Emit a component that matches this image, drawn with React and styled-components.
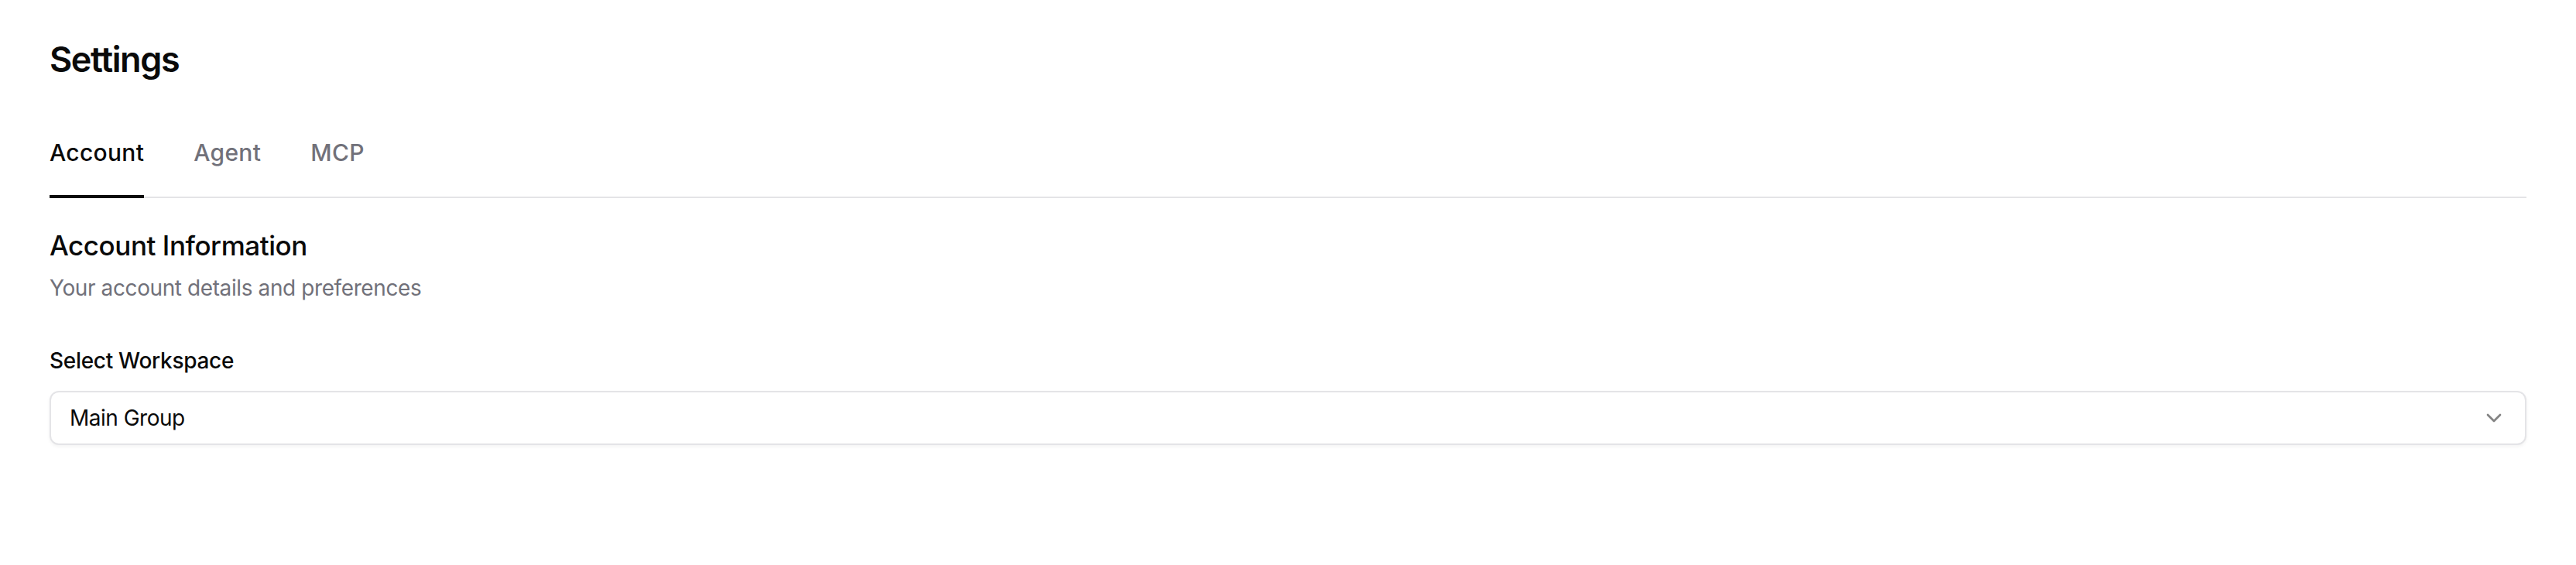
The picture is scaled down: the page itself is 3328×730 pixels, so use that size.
import React, { useState } from "react";
import styled, { createGlobalStyle } from "styled-components";
import { ChevronDown } from "lucide-react";

const GlobalStyle = createGlobalStyle`
  html, body {
    margin: 0;
    padding: 0;
    background: #ffffff;
  }
  body {
    font-family: Inter, "Noto Sans", "Liberation Sans", sans-serif;
    color: #0a0a0a;
    -webkit-font-smoothing: antialiased;
  }
  * { box-sizing: border-box; }
`;

const Page = styled.main`
  padding: 48px 64px 64px;
  min-height: 730px;
  display: flex;
  flex-direction: column;
`;

const Title = styled.h1`
  margin: 0;
  font-size: 45px;
  line-height: 58px;
  font-weight: 600;
  letter-spacing: -1.4px;
  color: #0a0a0a;
`;

const TabList = styled.div`
  margin-top: 71px;
  display: flex;
  gap: 64px;
  border-bottom: 2px solid #e4e4e7;
`;

const Tab = styled.button`
  appearance: none;
  background: none;
  border: none;
  border-bottom: 4px solid ${(p) => (p.$active ? "#0a0a0a" : "transparent")};
  margin: 0 0 -2px;
  padding: 0 0 35px;
  font-family: inherit;
  font-size: 30px;
  line-height: 40px;
  font-weight: 500;
  letter-spacing: 0.3px;
  color: ${(p) => (p.$active ? "#0a0a0a" : "#71717a")};
  cursor: pointer;
`;

const Section = styled.section`
  margin-top: 37px;
  display: flex;
  flex-direction: column;
`;

const SectionTitle = styled.h2`
  margin: 0;
  font-size: 35px;
  line-height: 48px;
  font-weight: 500;
  letter-spacing: -0.45px;
  color: #0a0a0a;
`;

const SectionDesc = styled.p`
  margin: 11px 0 0;
  font-size: 28px;
  line-height: 40px;
  font-weight: 400;
  letter-spacing: -0.4px;
  color: #71717a;
`;

const Field = styled.div`
  margin-top: 54px;
  display: flex;
  flex-direction: column;
  gap: 19px;
`;

const Label = styled.label`
  font-size: 28px;
  line-height: 40px;
  font-weight: 500;
  letter-spacing: -0.3px;
  color: #0a0a0a;
`;

const SelectTrigger = styled.button`
  appearance: none;
  width: 100%;
  height: 70px;
  display: flex;
  align-items: center;
  justify-content: space-between;
  padding: 0 24px;
  background: #ffffff;
  border: 2px solid #e4e4e7;
  border-radius: 12px;
  box-shadow: 0 2px 4px rgba(0, 0, 0, 0.05);
  font-family: inherit;
  font-size: 28px;
  line-height: 40px;
  font-weight: 400;
  letter-spacing: -0.5px;
  color: #0a0a0a;
  text-align: left;
  cursor: pointer;
`;

const Chevron = styled(ChevronDown)`
  color: #0a0a0a;
  opacity: 0.5;
  flex-shrink: 0;
`;

export default function App() {
  const [tab, setTab] = useState("account");
  const tabs = [
    { id: "account", label: "Account" },
    { id: "agent", label: "Agent" },
    { id: "mcp", label: "MCP" },
  ];
  return (
    <>
      <GlobalStyle />
      <Page>
        <Title>Settings</Title>
        <TabList>
          {tabs.map((t) => (
            <Tab key={t.id} $active={tab === t.id} onClick={() => setTab(t.id)}>
              {t.label}
            </Tab>
          ))}
        </TabList>
        <Section>
          <SectionTitle>Account Information</SectionTitle>
          <SectionDesc>Your account details and preferences</SectionDesc>
          <Field>
            <Label>Select Workspace</Label>
            <SelectTrigger>
              <span>Main Group</span>
              <Chevron size={32} strokeWidth={2} />
            </SelectTrigger>
          </Field>
        </Section>
      </Page>
    </>
  );
}
